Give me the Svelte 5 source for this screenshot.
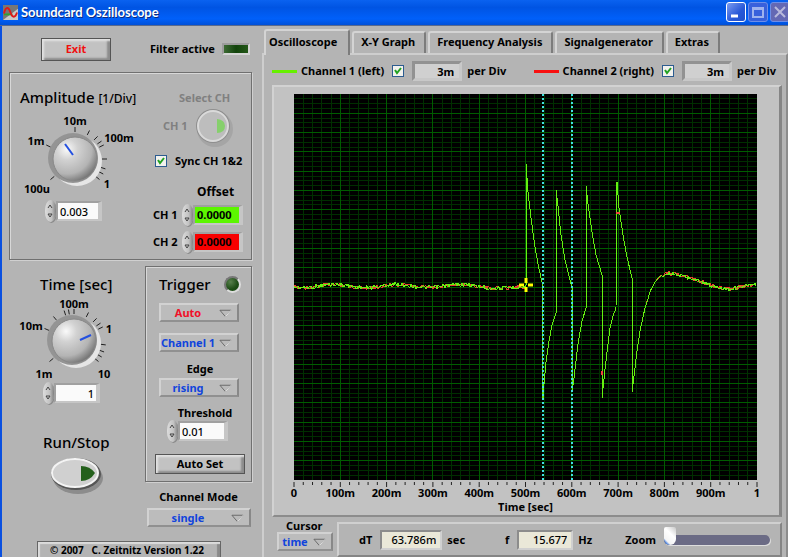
<script>
    let tabs = ['Oscilloscope', 'X-Y Graph', 'Frequency Analysis', 'Signalgenerator', 'Extras']
    let activeTab = $state('Oscilloscope')
    let syncChannels = $state(true)
    let showLeft = $state(true)
    let showRight = $state(true)
    let zoom = $state(0)

    let amplitudeKnob = {
        name: 'Amplitude',
        pointer: [45, 32, 53, 43],
        ticks: [-130, -64, 0, 27, 45, 56, 64, 90, 108, 118, 130],
        labels: [
            { text: '100u', x: 17, y: 81 },
            { text: '1m', x: 16, y: 33 },
            { text: '10m', x: 55, y: 13 },
            { text: '100m', x: 99, y: 30 },
            { text: '1', x: 87, y: 76 }
        ]
    }
    let timeKnob = {
        name: 'Time',
        pointer: [61, 46, 72, 41],
        ticks: [-130, -67, -40, -18, -10, 0, 27, 45, 56, 64, 97, 110, 120, 130],
        labels: [
            { text: '1m', x: 25, y: 84 },
            { text: '10m', x: 12, y: 36 },
            { text: '100m', x: 55, y: 14 },
            { text: '1', x: 90, y: 39 },
            { text: '10', x: 85, y: 84 }
        ]
    }

    // plot area in its own units
    const W = 463
    const H = 386
    let cursors = [249, 278]
    let axis = ['0', '100m', '200m', '300m', '400m', '500m', '600m', '700m', '800m', '900m', '1']

    let bursts = [
        [232, 191], [232, 70], [234, 98], [237, 124], [241, 153], [244, 170], [248, 188],
        [249, 304], [250, 290], [252, 268], [255, 247], [258, 231], [262, 219],
        [262, 96], [264, 112], [267, 141], [271, 166], [275, 182], [278, 194],
        [278, 298], [280, 284], [284, 250], [288, 227], [292, 214],
        [292, 92], [294, 110], [298, 138], [302, 161], [308, 181],
        [308, 304], [311, 275], [316, 234], [319, 222], [322, 214],
        [323, 88], [325, 114], [329, 141], [333, 163], [338, 184],
        [338, 298], [340, 282], [343, 257], [346, 237], [351, 214]
    ]
    let tail = [
        [351, 214], [356, 198], [361, 188], [366, 182], [374, 179], [384, 181], [396, 184],
        [411, 189], [421, 193], [436, 195], [450, 192], [463, 191]
    ]

    function noise(i, seed) {
        let n = Math.sin(i * 12.9898 + seed * 78.233) * 43758.5453
        return (n - Math.floor(n) - 0.5) * 4
    }
    function trace(seed) {
        let points = []
        for (let x = 0; x < 232; x++) {
            let drop = x > 190 ? (x - 190) / 14 : 0
            points.push([x, 192 - Math.sin((x - 25) / 10) * 1.6 + drop + noise(x, seed)])
        }
        points.push(...bursts)
        for (let i = 0; i < tail.length - 1; i++) {
            let [x1, y1] = tail[i]
            let [x2, y2] = tail[i + 1]
            for (let x = x1; x < x2; x++) {
                let wobble = x > 366 ? noise(x, seed) : noise(x, seed) / 3
                points.push([x, y1 + ((y2 - y1) * (x - x1)) / (x2 - x1) + wobble])
            }
        }
        return points.map((p) => p[0] + ',' + p[1].toFixed(1)).join(' ')
    }
    let left = trace(1)
    let right = trace(2)

    function polar(angle, r) {
        let a = (angle * Math.PI) / 180
        return [55 + Math.sin(a) * r, 47 - Math.cos(a) * r]
    }
</script>

{#snippet knob(k)}
    <svg class="knob" viewBox="0 0 120 88" role="img" aria-label={k.name}>
        {#each k.ticks as t}
            {@const a = polar(t, 27)}
            {@const b = polar(t, 32)}
            <line x1={a[0]} y1={a[1]} x2={b[0]} y2={b[1]} stroke="#222" />
        {/each}
        <circle cx="57" cy="49" r="25" fill="#e6e6e6" />
        <circle cx="53" cy="46" r="25" fill="#949494" />
        <circle cx="55" cy="47" r="22" fill="url(#metal)" stroke="#888" />
        <line x1={k.pointer[0]} y1={k.pointer[1]} x2={k.pointer[2]} y2={k.pointer[3]} stroke="#2450e0" stroke-width="2" />
        {#each k.labels as l}
            <text x={l.x} y={l.y}>{l.text}</text>
        {/each}
    </svg>
{/snippet}

{#snippet number(id, value, kind)}
    <div class="number {kind}">
        <div class="spin">
            <button aria-label="Increase"><svg viewBox="0 0 10 9"><path d="M3 6 L5 3 L7 6" /></svg></button>
            <button aria-label="Decrease"><svg viewBox="0 0 10 9"><path d="M3 3 L5 6 L7 3 Z" /></svg></button>
        </div>
        <input {id} {value} aria-label={id} />
    </div>
{/snippet}

{#snippet dropdown(label, options, kind)}
    <div class="dropdown {kind}">
        <select aria-label={label}>
            {#each options as option}
                <option>{option}</option>
            {/each}
        </select>
        <svg viewBox="0 0 14 9"><path d="M1 1 H13 L7 8 Z" fill="#bbb" stroke="#666" /><path d="M13 1 L7 8" stroke="#eee" /></svg>
    </div>
{/snippet}

{#snippet check()}
    <svg class="mark" viewBox="0 0 12 12"><path d="M3 5 L5 8 L9 3" fill="none" stroke="#21a121" stroke-width="2" /></svg>
{/snippet}

<svg class="defs" aria-hidden="true">
    <defs>
        <radialGradient id="metal" cx="0.32" cy="0.28" r="0.8">
            <stop offset="0" stop-color="#fafafa" />
            <stop offset="0.3" stop-color="#d2d2d2" />
            <stop offset="0.7" stop-color="#b4b4b4" />
            <stop offset="1" stop-color="#6c6c6c" />
        </radialGradient>
    </defs>
</svg>

<div class="window">
    <header>
        <svg class="logo" viewBox="0 0 16 16">
            <rect width="16" height="16" fill="#777" />
            <path d="M0 16 L16 4 V16 Z" fill="#c8c8c8" />
            <path d="M1 10 H10" stroke="#30a030" stroke-width="2" />
            <path d="M1 9 C3 1 6 2 8 8 S13 14 15 8" fill="none" stroke="#e01818" stroke-width="2" />
        </svg>
        <h1>Soundcard Oszilloscope</h1>
        <div class="caption">
            <button aria-label="Minimize"><svg viewBox="0 0 18 18"><path d="M4 13 H11" stroke="#fff" stroke-width="3" /></svg></button>
            <button class="off" aria-label="Maximize"><svg viewBox="0 0 18 18"><path d="M4 5 H14 V14 H4 Z M4 6 H14" fill="none" stroke="#9eb2ee" stroke-width="2" /></svg></button>
            <button class="off close" aria-label="Close"><svg viewBox="0 0 18 18"><path d="M4 4 L14 14 M14 4 L4 14" stroke="#b9b9dc" stroke-width="2" /></svg></button>
        </div>
    </header>

    <main>
        <aside>
            <div class="top">
                <button class="push exit">Exit</button>
                <span class="filter">Filter active</span>
                <span class="bar-led"></span>
            </div>

            <section class="group amplitude">
                <div class="dial">
                    <h2>Amplitude <small>[1/Div]</small></h2>
                    {@render knob(amplitudeKnob)}
                    {@render number('amplitude', '0.003', '')}
                </div>
                <div class="channels">
                    <span class="dim select-title">Select CH</span>
                    <div class="select-ch">
                        <span class="dim">CH 1</span>
                        <button aria-label="Select channel">
                            <svg viewBox="0 0 42 42">
                                <circle cx="22" cy="24" r="18" fill="#a5a5a5" />
                                <circle cx="20" cy="21" r="17" fill="#8e8e8e" />
                                <circle cx="20" cy="21" r="15" fill="#bdbdbd" stroke="#dadada" stroke-width="2" />
                                <path d="M24 14 Q32 15 32 21 Q32 28 24 28 Z" fill="#86d06c" />
                            </svg>
                        </button>
                    </div>
                    <label class="sync">
                        <span class="box"><input type="checkbox" bind:checked={syncChannels} />{#if syncChannels}{@render check()}{/if}</span>
                        Sync CH 1&amp;2
                    </label>
                    <span class="offset">Offset</span>
                    <div class="offset-row"><label for="offset1">CH 1</label>{@render number('offset1', '0.0000', 'green')}</div>
                    <div class="offset-row"><label for="offset2">CH 2</label>{@render number('offset2', '0.0000', 'red')}</div>
                </div>
            </section>

            <div class="lower">
                <div class="time">
                    <h2>Time [sec]</h2>
                    {@render knob(timeKnob)}
                    {@render number('time', '1', 'right')}
                    <h2 class="run-title">Run/Stop</h2>
                    <button class="run" aria-label="Run/Stop">
                        <svg viewBox="0 0 58 40">
                            <ellipse cx="29" cy="22" rx="25" ry="16" fill="#8c8c8c" />
                            <ellipse cx="27" cy="18" rx="25" ry="16" fill="#555" />
                            <ellipse cx="26" cy="17" rx="23" ry="14" fill="#d0d0d0" stroke="#f4f4f4" stroke-width="2" />
                            <path d="M32 10 Q41 10 46 17 Q41 25 32 25 Z" fill="#24601c" />
                        </svg>
                    </button>
                </div>
                <div class="trigger-side">
                    <section class="group trigger">
                        <div class="trigger-head"><h2>Trigger</h2><span class="led"></span></div>
                        {@render dropdown('Trigger mode', ['Auto', 'Normal', 'Single'], 'hot')}
                        {@render dropdown('Trigger channel', ['Channel 1', 'Channel 2'], 'second')}
                        <span class="caption-text">Edge</span>
                        {@render dropdown('Edge', ['rising', 'falling'], '')}
                        <label class="caption-text threshold" for="threshold">Threshold</label>
                        {@render number('threshold', '0.01', '')}
                        <button class="push auto-set">Auto Set</button>
                    </section>
                    <span class="mode-title">Channel Mode</span>
                    {@render dropdown('Channel Mode', ['single', 'CH1 + CH2', 'CH1 - CH2'], 'wide')}
                </div>
            </div>
            <div class="about">© 2007&nbsp;&nbsp; C. Zeitnitz Version 1.22</div>
        </aside>

        <div class="content">
            <div class="tabs" role="tablist">
                {#each tabs as tab}
                    <button role="tab" aria-selected={tab === activeTab} class:active={tab === activeTab} onclick={() => (activeTab = tab)}>{tab}</button>
                {/each}
            </div>
            <div class="page">
                <div class="legend">
                    <div class="channel">
                        <i class="line lime"></i>
                        <label for="show1">Channel 1 (left)</label>
                        <span class="box"><input id="show1" type="checkbox" bind:checked={showLeft} />{#if showLeft}{@render check()}{/if}</span>
                        <input class="div-value" value="3m" aria-label="Channel 1 per Div" />
                        <span>per Div</span>
                    </div>
                    <div class="channel">
                        <i class="line crimson"></i>
                        <label for="show2">Channel 2 (right)</label>
                        <span class="box"><input id="show2" type="checkbox" bind:checked={showRight} />{#if showRight}{@render check()}{/if}</span>
                        <input class="div-value" value="3m" aria-label="Channel 2 per Div" />
                        <span>per Div</span>
                    </div>
                </div>

                <div class="scope">
                    <svg class="plot" viewBox="0 0 {W} {H}" preserveAspectRatio="none">
                        <rect width={W} height={H} fill="#000" />
                        <g shape-rendering="crispEdges">
                            {#each Array(80) as _, i}
                                {#if i % 4}<line x1="0" x2={W} y1={(i * H) / 80} y2={(i * H) / 80} stroke="#002e00" />{/if}
                            {/each}
                            {#each Array(50) as _, i}
                                {#if i % 5}<line y1="0" y2={H} x1={(i * W) / 50} x2={(i * W) / 50} stroke="#003000" />{/if}
                            {/each}
                            {#each Array(19) as _, i}
                                <line x1="0" x2={W} y1={((i + 1) * H) / 20} y2={((i + 1) * H) / 20} stroke="#005c00" />
                            {/each}
                            {#each Array(9) as _, i}
                                <line y1="0" y2={H} x1={((i + 1) * W) / 10} x2={((i + 1) * W) / 10} stroke="#005c00" />
                            {/each}
                            {#if showRight}<polyline points={right} fill="none" stroke="#e84030" />{/if}
                            {#if showLeft}<polyline points={left} fill="none" stroke="#66f010" />{/if}
                        </g>
                        <path d="M322 119 H326 M308 277 V281" stroke="#f04040" stroke-width="2" />
                        {#each cursors as x}
                            <line x1={x} x2={x} y1="0" y2={H} stroke="#40e0e0" stroke-width="2" stroke-dasharray="2 2" />
                        {/each}
                        <path d="M225 191 H230 M234 191 H239 M232 184 V189 M232 193 V198" stroke="#ffff00" stroke-width="3" />
                    </svg>
                    <svg class="axis">
                        {#each Array(51) as _, i}
                            <line x1="{i * 2}%" x2="{i * 2}%" y1="2" y2={i % 5 ? 5 : 7} stroke="#222" />
                        {/each}
                        {#each axis as label, i}
                            <text x="{i * 10}%" y="17">{label}</text>
                        {/each}
                    </svg>
                    <div class="axis-title">Time [sec]</div>
                </div>

                <div class="bottom">
                    <div class="cursor">
                        <span>Cursor</span>
                        {@render dropdown('Cursor', ['time', 'level', 'off'], 'small')}
                    </div>
                    <div class="readout">
                        <label for="dt">dT</label>
                        <input id="dt" value="63.786m" readonly />
                        <span>sec</span>
                        <label class="freq" for="freq">f</label>
                        <input id="freq" class="short" value="15.677" readonly />
                        <span>Hz</span>
                        <label class="zoom" for="zoom">Zoom</label>
                        <input id="zoom" type="range" min="0" max="100" bind:value={zoom} />
                    </div>
                </div>
            </div>
        </div>
    </main>
</div>

<style>
    :global(body) {
        margin: 0;
        background: #b4b4b4;
    }
    * {
        box-sizing: border-box;
    }
    .window {
        min-height: 100vh;
        display: flex;
        flex-direction: column;
        overflow: hidden;
        background: #b4b4b4;
        color: #000;
        font: bold 11px/14px "Noto Sans", "Open Sans", sans-serif;
    }
    button, input, select {
        font: inherit;
        color: inherit;
        margin: 0;
        padding: 0;
        border: 0;
        background: none;
    }
    svg {
        display: block;
    }
    text {
        font-size: 11px;
        text-anchor: middle;
    }
    h2 {
        margin: 0;
        font-size: 15px;
        line-height: 20px;
        font-weight: 500;
        white-space: nowrap;
    }
    h2 small {
        font-size: 12px;
    }
    .defs {
        position: absolute;
        width: 0;
        height: 0;
    }

    /* title bar */
    header {
        height: 26px;
        display: flex;
        align-items: center;
        padding: 0 0 1px 3px;
        background: linear-gradient(#0a62f0, #0054e3 30%, #0060fa 75%, #0050d8);
        border-bottom: 1px solid #5a6a8c;
    }
    .logo {
        width: 15px;
        height: 15px;
        margin-right: 3px;
    }
    h1 {
        margin: 0;
        flex: 1;
        color: #fff;
        font: bold 13px/18px Lato, sans-serif;
        text-shadow: 1px 1px #0a2a80;
    }
    .caption {
        display: flex;
        gap: 2px;
        margin-right: -2px;
    }
    .caption button {
        width: 20px;
        height: 20px;
        border: 1px solid #fff;
        border-radius: 3px;
        background: linear-gradient(135deg, #7c9cf0, #2858d8 60%, #2050cc);
    }
    .caption .off {
        border-color: #6d8ee8;
        background: #3860dc;
    }
    .caption .close {
        background: #6468b4;
    }

    main {
        flex: 1;
        display: flex;
    }
    aside {
        flex: none;
        width: 262px;
        padding: 11px 10px 0 7px;
        border-left: 2px solid #0a50e0;
        display: flex;
        flex-direction: column;
    }
    .top {
        display: flex;
        align-items: center;
        height: 24px;
        padding-left: 32px;
    }
    .push {
        border: 1px solid #555;
        background: #c2c2c2;
        box-shadow: inset 2px 2px 2px #e2e2e2, inset -3px -2px 2px #8c8c8c;
    }
    .exit {
        width: 70px;
        height: 23px;
        color: #f01010;
    }
    .filter {
        margin-left: 39px;
        width: 67px;
        white-space: nowrap;
    }
    .bar-led {
        width: 28px;
        height: 12px;
        margin-left: 5px;
        border: 2px solid #9c9c9c;
        border-right-color: #d4d4d4;
        border-bottom-color: #d4d4d4;
        background: linear-gradient(90deg, #3d6a34, #12440c 50%, #245818);
    }
    .group {
        border: 1px solid #707070;
        box-shadow: inset 1px 1px #d8d8d8, 1px 1px #d0d0d0;
    }

    /* knobs and number fields */
    .knob {
        width: 120px;
        height: 88px;
    }
    .number {
        display: flex;
        align-items: center;
    }
    .spin {
        width: 11px;
        height: 22px;
        display: flex;
        flex-direction: column;
        justify-content: center;
        border-radius: 6px / 11px;
        background: linear-gradient(90deg, #ddd, #c2c2c2 60%, #808080);
        box-shadow: 1px 1px #8a8a8a;
    }
    .spin button {
        width: 10px;
        height: 9px;
    }
    .spin path {
        fill: none;
        stroke: #444;
    }
    .number input {
        width: 46px;
        height: 20px;
        padding: 0 2px;
        border: 2px solid #a0a0a0;
        border-right: 4px solid #c6c6c6;
        border-bottom-color: #c6c6c6;
        background: #fafafa;
        font-weight: 500;
    }
    .right input {
        text-align: right;
    }
    .green input, .red input {
        width: 50px;
        font-weight: bold;
        background: #5cf600;
    }
    .red input {
        background: #f80000;
    }

    .amplitude {
        height: 188px;
        margin-top: 11px;
        display: flex;
    }
    .dial {
        width: 134px;
        padding: 14px 0 0 10px;
    }
    .dial .knob {
        margin-top: 3px;
    }
    .dial .number {
        margin-left: 25px;
    }
    .channels {
        flex: 1;
        padding-top: 18px;
    }
    .dim {
        color: #808080;
    }
    .select-title {
        display: block;
        margin-left: 35px;
    }
    .select-ch {
        display: flex;
        align-items: center;
        margin-left: 19px;
        height: 42px;
        gap: 5px;
    }
    .select-ch button {
        width: 42px;
        height: 42px;
    }
    .sync {
        display: flex;
        align-items: center;
        gap: 8px;
        margin: 7px 0 0 11px;
        white-space: nowrap;
    }
    .box {
        position: relative;
        width: 12px;
        height: 12px;
        flex: none;
    }
    .box input {
        appearance: none;
        display: block;
        width: 12px;
        height: 12px;
        border: 1px solid #2c5c90;
        background: #f2f2ee;
    }
    .mark {
        position: absolute;
        inset: 0;
        pointer-events: none;
    }
    .offset {
        display: block;
        margin: 15px 0 0 53px;
        font-size: 12px;
        line-height: 18px;
    }
    .offset-row {
        display: flex;
        align-items: center;
        gap: 5px;
        height: 27px;
    }
    .offset-row label {
        width: 33px;
        padding-left: 9px;
        white-space: nowrap;
    }

    .lower {
        display: flex;
        margin-top: 6px;
    }
    .time {
        width: 136px;
        padding: 8px 0 0 10px;
    }
    .time h2 {
        margin-left: 21px;
    }
    .time .number {
        margin-left: 24px;
    }
    .time .run-title {
        margin: 28px 0 0 24px;
    }
    .run {
        width: 58px;
        height: 40px;
        margin: 4px 0 0 30px;
    }
    .trigger-side {
        width: 107px;
    }
    .trigger {
        height: 216px;
        padding: 7px 0 0 13px;
    }
    .trigger-head {
        display: flex;
        align-items: center;
        justify-content: space-between;
        padding-right: 10px;
    }
    .led {
        width: 17px;
        height: 17px;
        border-radius: 50%;
        border: 2px solid #777;
        border-right-color: #ddd;
        border-bottom-color: #ddd;
        background: radial-gradient(circle at 35% 30%, #58804c, #1c4c14 60%);
    }
    .dropdown {
        position: relative;
        width: 80px;
        height: 19px;
        margin-top: 9px;
        color: #1044dc;
    }
    .dropdown select {
        appearance: none;
        width: 100%;
        height: 100%;
        padding: 0 22px 0 0;
        border: 2px solid #d2d2d2;
        border-right-color: #888;
        border-bottom-color: #909090;
        background: #bcbcbc;
        text-align: center;
        text-align-last: center;
    }
    .dropdown svg {
        position: absolute;
        right: 7px;
        top: 6px;
        width: 13px;
        height: 9px;
        fill: none;
        pointer-events: none;
    }
    .hot {
        color: #f01028;
    }
    .second {
        margin-top: 11px;
    }
    .caption-text {
        display: block;
        margin-top: 10px;
        text-align: center;
        padding-right: 10px;
    }
    .caption-text + .dropdown {
        margin-top: 2px;
    }
    .threshold {
        margin-top: 9px;
        padding-right: 0;
    }
    .trigger .number {
        margin-left: 8px;
    }
    .trigger .number input {
        width: 50px;
    }
    .auto-set {
        width: 90px;
        height: 20px;
        margin: 12px 0 0 -4px;
    }
    .mode-title {
        display: block;
        margin-top: 8px;
        text-align: center;
    }
    .wide {
        width: 104px;
        margin: 4px 0 0 2px;
    }
    .about {
        width: 184px;
        height: 17px;
        margin: 14px 0 0 28px;
        padding-left: 12px;
        border: 1px solid #666;
        border-bottom: 0;
        box-shadow: inset 2px 2px 1px #dcdcdc, inset -3px 0 1px #8a8a8a;
        font-size: 10px;
        line-height: 17px;
        white-space: nowrap;
    }

    /* tabs */
    .content {
        flex: 1;
        min-width: 0;
        display: flex;
        flex-direction: column;
        padding-top: 3px;
    }
    .tabs {
        display: flex;
        align-items: flex-end;
        height: 24px;
        gap: 2px;
        padding-left: 2px;
        position: relative;
        z-index: 1;
    }
    .tabs button {
        height: 22px;
        padding: 0 9px 3px 7px;
        border: 2px solid #d4d4d4;
        border-right-color: #7c7c7c;
        border-bottom: 0;
        border-radius: 3px 3px 0 0;
        white-space: nowrap;
    }
    .tabs .active {
        height: 26px;
        margin-bottom: -2px;
        padding: 0 11px 3px 3px;
        background: #b4b4b4;
    }
    .page {
        flex: 1;
        padding: 4px 4px 0 8px;
        border: 2px solid #cecece;
        border-right-color: #8c8c8c;
        border-bottom: 0;
    }
    .legend {
        display: flex;
        justify-content: space-between;
        padding: 0 6px 2px 0;
        height: 26px;
    }
    .channel {
        display: flex;
        align-items: center;
        gap: 8px;
        white-space: nowrap;
    }
    .line {
        width: 25px;
        height: 3px;
        margin-right: -4px;
    }
    .lime {
        background: #66f000;
    }
    .crimson {
        background: #f81010;
    }
    .div-value {
        width: 50px;
        height: 20px;
        padding: 0 5px;
        border: 3px solid #929292;
        border-right-color: #c8c8c8;
        border-bottom-color: #c8c8c8;
        background: #d0d0d0;
        text-align: right;
        margin-right: -3px;
    }

    .scope {
        padding: 7px 22px 2px 20px;
        background: #c2c2c2;
        border: 2px solid #d2d2d2;
        border-right: 3px solid #858585;
        border-bottom-color: #8c8c8c;
    }
    .plot {
        width: 100%;
        height: 386px;
    }
    .axis {
        width: 100%;
        height: 20px;
        overflow: visible;
    }
    .axis-title {
        text-align: center;
        line-height: 13px;
    }

    .bottom {
        display: flex;
        align-items: flex-start;
        gap: 5px;
        margin-top: 2px;
    }
    .cursor {
        width: 60px;
        flex: none;
        padding-left: 5px;
    }
    .cursor span {
        display: block;
        margin-left: 9px;
        line-height: 13px;
    }
    .small {
        width: 56px;
        margin-top: 0;
    }
    .small select {
        padding-right: 20px;
    }
    .readout {
        flex: 1;
        min-width: 0;
        height: 35px;
        margin-top: 3px;
        padding: 0 10px 0 20px;
        display: flex;
        align-items: center;
        border: 2px solid #d0d0d0;
        border-right-color: #858585;
        border-bottom-color: #858585;
    }
    .readout input:not([type=range]) {
        width: 62px;
        height: 20px;
        margin: 0 5px 0 8px;
        padding: 0 4px;
        border: 2px solid #8c8c8c;
        border-right-color: #d0d0d0;
        border-bottom-color: #d0d0d0;
        background: #eae8d8;
        text-align: right;
        font-weight: 500;
    }
    .readout .short:not([type=range]) {
        width: 56px;
    }
    .freq {
        margin-left: 40px;
    }
    .zoom {
        margin: 0 8px 0 33px;
    }
    input[type=range] {
        appearance: none;
        flex: 1;
        min-width: 0;
        height: 18px;
    }
    input[type=range]::-webkit-slider-runnable-track {
        height: 10px;
        border-radius: 5px;
        background: #6b6b85;
        box-shadow: 1px 1px #ddd;
    }
    input[type=range]::-webkit-slider-thumb {
        appearance: none;
        width: 12px;
        height: 18px;
        margin-top: -8px;
        border-radius: 2px 2px 6px 6px;
        background: linear-gradient(45deg, #3878e0 12%, #f4f4f4 24%, #fff 60%, #c8c8c8);
    }
</style>
